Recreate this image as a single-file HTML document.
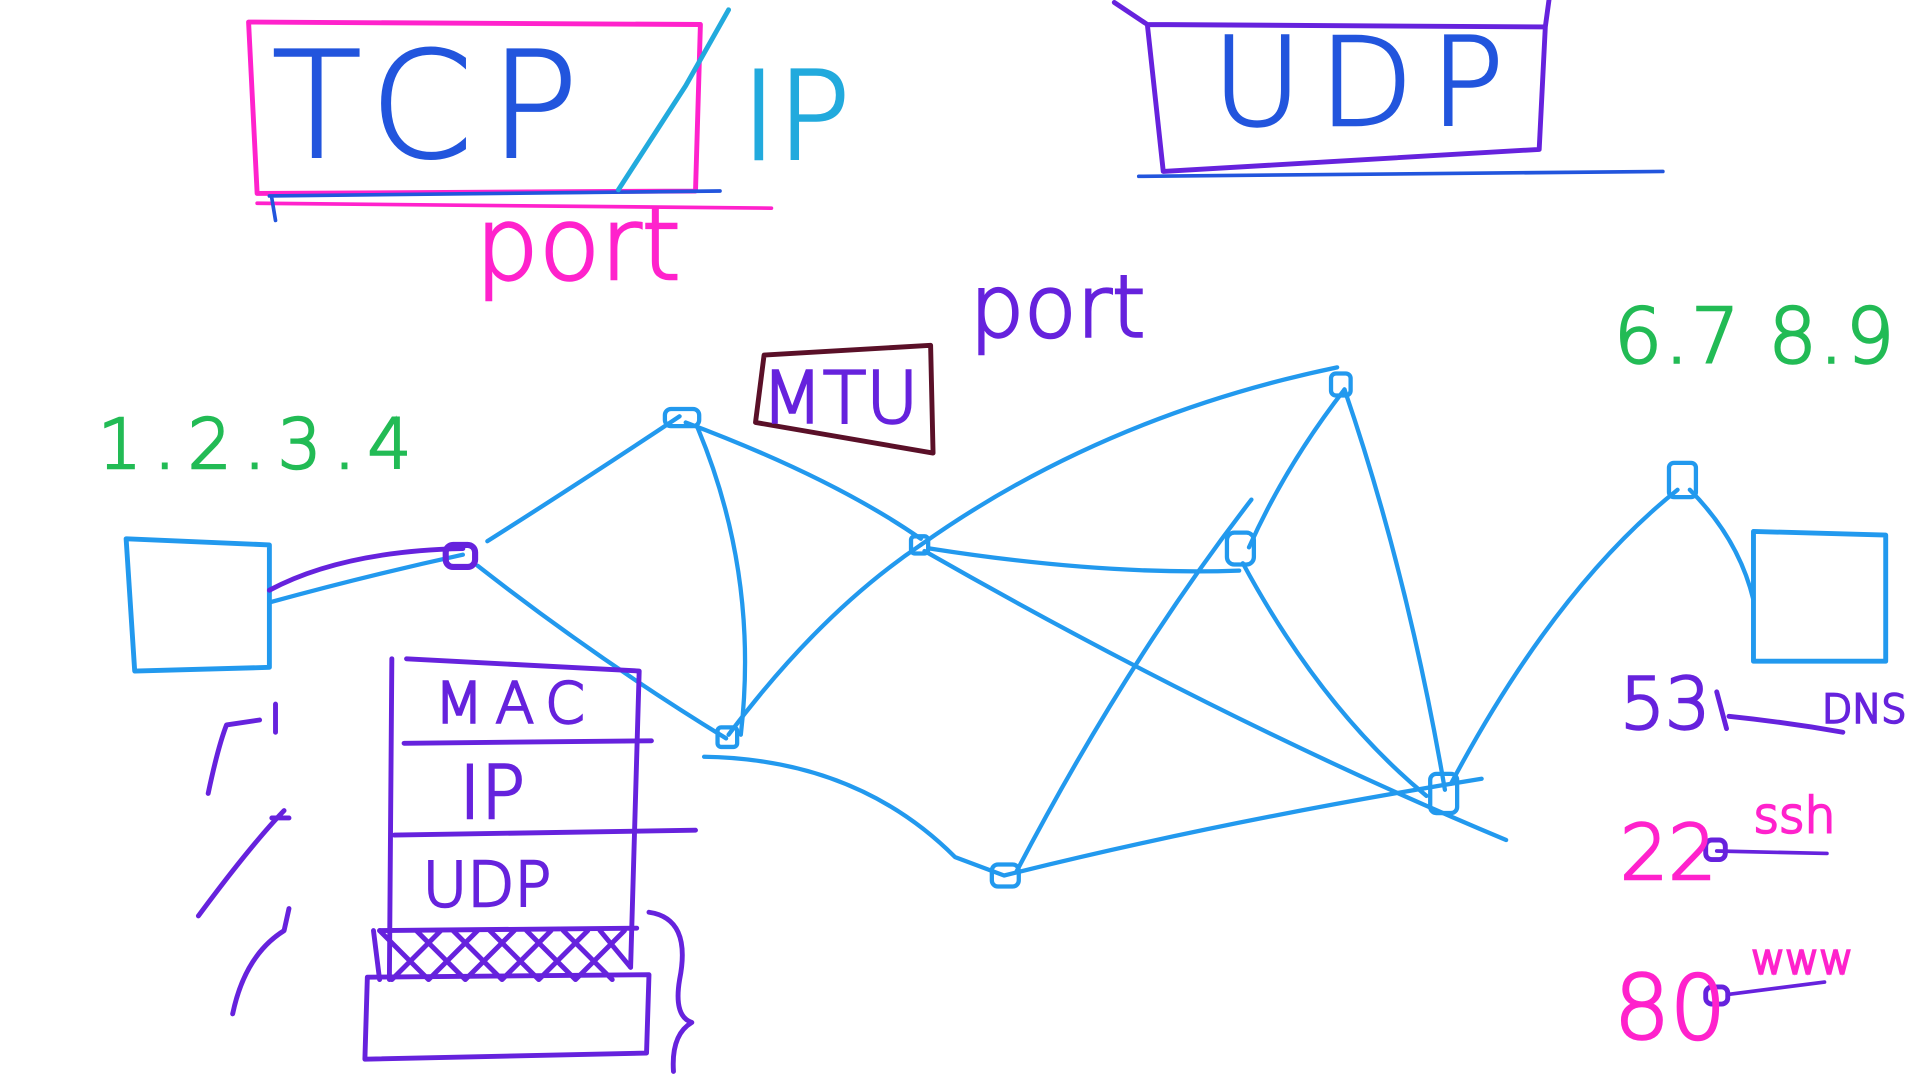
<!DOCTYPE html>
<html><head><meta charset="utf-8"><style>
html,body{margin:0;padding:0;background:#fff;width:1920px;height:1080px;overflow:hidden}
svg{display:block}
text{font-family:"DejaVu Sans","Liberation Sans",sans-serif;font-weight:200}
</style></head><body>
<svg width="1920" height="1080" viewBox="0 0 1568 882" preserveAspectRatio="none" xmlns="http://www.w3.org/2000/svg">
<g fill="none" stroke-linecap="round" stroke-linejoin="round">
<path d="M203 18 L572 20 L568 156 L210 158 Z" stroke="#ff22cc" stroke-width="4"/>
<path d="M210 166 L630 170" stroke="#ff22cc" stroke-width="3"/>
<path d="M220 160 L588 156 M222 162 L225 180" stroke="#2255dd" stroke-width="3"/>
<path d="M505 155 L560 70 L595 8" stroke="#22aadd" stroke-width="4"/>
<path d="M937 20 L1262 22 L1257 122 L950 140 Z M910 2 L937 20 M1265 0 L1262 22" stroke="#6622dd" stroke-width="4"/>
<path d="M930 144 L1358 140" stroke="#2255dd" stroke-width="3"/>
<path d="M624 290 L760 282 L762 370 L617 345 Z" stroke="#5a1028" stroke-width="4"/>
<path d="M103 440 L220 445 L220 545 L110 548 Z" stroke="#2299ee" stroke-width="4"/>
<path d="M1432 434 L1540 437 L1540 540 L1432 540 Z" stroke="#2299ee" stroke-width="4"/>
<g stroke="#2299ee" stroke-width="3.5">
<path d="M220 492 Q300 470 378 453"/>
<path d="M398 442 Q480 390 555 340"/>
<path d="M390 462 Q490 540 593 603"/>
<path d="M570 350 Q620 470 605 600"/>
<path d="M560 345 Q680 390 752 440"/>
<path d="M595 600 Q670 500 752 445"/>
<path d="M752 445 Q900 340 1092 300"/>
<path d="M760 448 Q900 470 1012 466"/>
<path d="M755 450 Q1000 590 1230 686"/>
<path d="M1098 318 Q1050 380 1020 447"/>
<path d="M1098 318 Q1150 470 1180 645"/>
<path d="M1015 460 Q1080 580 1165 650"/>
<path d="M1022 408 Q920 540 830 712"/>
<path d="M575 618 Q700 620 780 700 L820 715 Q1000 670 1210 636"/>
<path d="M1185 640 Q1270 480 1370 400"/>
<path d="M1380 400 Q1420 440 1432 490"/>
<rect x="543" y="334" width="28" height="14" rx="5"/>
<rect x="744" y="438" width="14" height="14" rx="3"/>
<rect x="586" y="594" width="16" height="16" rx="3"/>
<rect x="1002" y="435" width="22" height="26" rx="6"/>
<rect x="1087" y="305" width="16" height="18" rx="4"/>
<rect x="810" y="706" width="22" height="18" rx="5"/>
<rect x="1168" y="632" width="22" height="32" rx="5"/>
<rect x="1363" y="378" width="22" height="28" rx="4"/>
</g>
<path d="M220 482 Q280 450 378 448" stroke="#6622dd" stroke-width="4"/>
<rect x="364" y="445" width="24" height="18" rx="6" stroke="#6622dd" stroke-width="5"/>
<g stroke="#6622dd" stroke-width="4">
<path d="M332 538 L522 548 L515 790 M320 538 L318 800"/>
<path d="M330 607 L532 605 M322 682 L568 678"/>
<path d="M310 760 L520 758 M305 760 L310 800"/>
<path d="M310 760 L350 800 M340 760 L380 800 M370 760 L410 800 M400 760 L440 800 M430 760 L470 800 M460 760 L500 800 M490 760 L515 790 M320 800 L360 760 M350 800 L390 760 M380 800 L420 760 M410 800 L450 760 M440 800 L480 760 M470 800 L510 760"/>
<path d="M300 798 L530 796 L528 860 L298 865 Z"/>
<path d="M530 745 Q565 750 555 800 Q550 830 565 835 Q548 845 550 875"/>
<path d="M225 575 L225 598 M212 588 L185 592 Q178 610 170 648"/>
<path d="M232 662 Q205 690 162 748 M222 668 L236 668"/>
<path d="M236 742 L232 760 Q200 780 190 828"/>
<path d="M1402 565 L1410 595 M1412 585 Q1460 590 1505 598"/>
</g>
<path d="M1402 695 L1492 697" stroke="#6622dd" stroke-width="3"/>
<rect x="1393" y="686" width="16" height="16" rx="5" stroke="#6622dd" stroke-width="4"/>
<path d="M1412 812 L1490 802" stroke="#6622dd" stroke-width="3"/>
<rect x="1393" y="806" width="18" height="14" rx="5" stroke="#6622dd" stroke-width="4"/>
</g>
<g stroke-width="2">
<text x="222" y="128" font-size="120" fill="#2255dd" stroke="#2255dd" letter-spacing="14">TCP</text>
<text x="605" y="130" font-size="100" fill="#22aadd" stroke="#22aadd">IP</text>
<text x="388" y="228" font-size="82" fill="#ff22cc" stroke="#ff22cc">port</text>
<text x="990" y="102" font-size="100" fill="#2255dd" stroke="#2255dd" letter-spacing="14">UDP</text>
<text x="792" y="275" font-size="70" fill="#6622dd" stroke="#6622dd">port</text>
<text x="1318" y="296" font-size="62" fill="#22bb55" stroke="#22bb55" letter-spacing="2">6.7 8.9</text>
<text x="80" y="382" font-size="56" fill="#22bb55" stroke="#22bb55" letter-spacing="10">1.2.3.4</text>
<text x="622" y="345" font-size="58" fill="#6622dd" stroke="#6622dd">MTU</text>
<text x="355" y="590" font-size="46" fill="#6622dd" stroke="#6622dd" letter-spacing="10">MAC</text>
<text x="375" y="668" font-size="60" fill="#6622dd" stroke="#6622dd">IP</text>
<text x="345" y="740" font-size="50" fill="#6622dd" stroke="#6622dd">UDP</text>
<text x="1323" y="595" font-size="58" fill="#6622dd" stroke="#6622dd">53</text>
<text x="1488" y="590" font-size="32" fill="#6622dd" stroke="#6622dd">DNS</text>
<text x="1323" y="718" font-size="62" fill="#ff22cc" stroke="#ff22cc">22</text>
<text x="1432" y="680" font-size="40" fill="#ff22cc" stroke="#ff22cc">ssh</text>
<text x="1318" y="848" font-size="72" fill="#ff22cc" stroke="#ff22cc">80</text>
<text x="1430" y="795" font-size="34" fill="#ff22cc" stroke="#ff22cc">www</text>
</g>
</svg>
</body></html>
